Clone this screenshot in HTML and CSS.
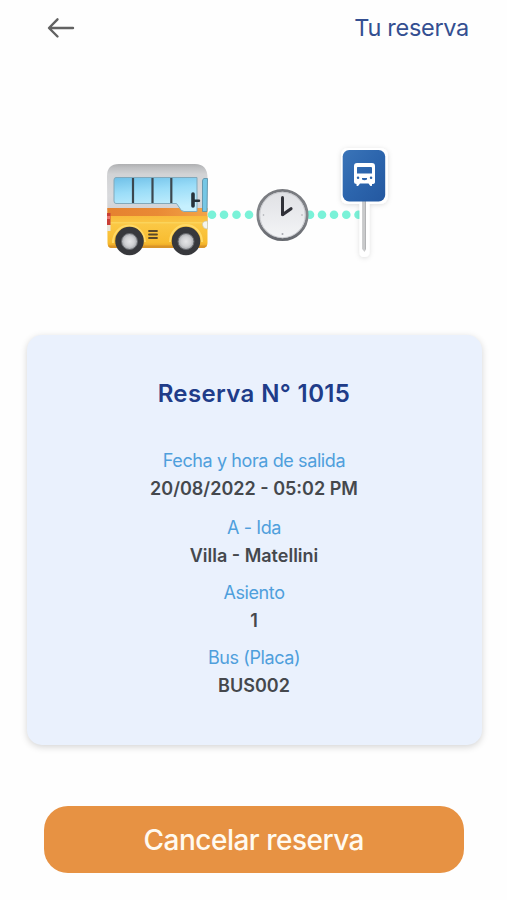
FILE: index.html
```html
<!DOCTYPE html>
<html lang="es">
<head>
<meta charset="utf-8">
<title>Tu reserva</title>
<link rel="stylesheet" href="styles.css">
</head>
<body>
<header class="header">
  <svg class="back" width="28" height="22" viewBox="47 17 28 22" aria-hidden="true">
    <path d="M73 28H49.500M57.500 19.300L49 28L57.500 36.500" fill="none" stroke="#626262" stroke-width="2.400" stroke-linecap="round" stroke-linejoin="round"/>
  </svg>
  <h1 class="header-title">Tu reserva</h1>
</header>
<main>
  <svg class="scene" width="507" height="140" viewBox="0 135 507 140" aria-hidden="true">
    <defs>
      <linearGradient id="roof" x2="0" y2="1"><stop stop-color="#aaabad"/><stop offset=".1" stop-color="#bfc0c2"/><stop offset=".24" stop-color="#d2d3d5"/><stop offset=".7" stop-color="#d9dadd"/><stop offset="1" stop-color="#d2d3d6"/></linearGradient>
      <linearGradient id="body" x2="0" y2="1"><stop stop-color="#f8bb3c"/><stop offset=".25" stop-color="#fbc845"/><stop offset=".8" stop-color="#f8bc30"/><stop offset="1" stop-color="#e39c1e"/></linearGradient>
      <linearGradient id="stripe"><stop stop-color="#e5822f"/><stop offset=".5" stop-color="#e98a35"/><stop offset="1" stop-color="#f3a548"/></linearGradient>
      <linearGradient id="glass" x2=".25" y2="1"><stop stop-color="#6fc0e8"/><stop offset=".45" stop-color="#9bddf8"/><stop offset="1" stop-color="#c6f0fe"/></linearGradient>
      <linearGradient id="rim" x2="0" y2="1"><stop stop-color="#77797e"/><stop offset=".5" stop-color="#85878c"/><stop offset="1" stop-color="#65686e"/></linearGradient>
      <linearGradient id="dial" x2="0" y2="1"><stop stop-color="#dfe0e4"/><stop offset="1" stop-color="#f4f5f7"/></linearGradient>
      <radialGradient id="hub"><stop stop-color="#e6e6e8"/><stop offset=".6" stop-color="#cfd0d3"/><stop offset="1" stop-color="#a5a7ab"/></radialGradient>
      <linearGradient id="sign" x1="0" y1="0" x2="1" y2="1"><stop stop-color="#3a74b8"/><stop offset=".5" stop-color="#2c65ad"/><stop offset="1" stop-color="#2458a0"/></linearGradient>
      <linearGradient id="pole"><stop stop-color="#b5b6b8"/><stop offset=".5" stop-color="#d2d3d4"/><stop offset="1" stop-color="#a6a7a9"/></linearGradient>
      <filter id="shade" x="-30%" y="-20%" width="160%" height="140%"><feDropShadow dx="0" dy="1" stdDeviation="2.800" flood-color="#000" flood-opacity=".13"/></filter>
      <clipPath id="bus"><path d="M107 176Q107 164 119 164H195Q207.500 164 207.500 178V243Q207.500 248 202 248H112Q107.500 248 107.500 243Z"/></clipPath>
    </defs>
    <g clip-path="url(#bus)">
      <path fill="url(#roof)" d="M106 163H209V210H106Z"/>
      <path fill="url(#stripe)" d="M106 208H209V224H106Z"/>
      <path fill="url(#body)" d="M106 216H209V249H106Z"/>
      <path fill="#fbd45b" d="M106 222H209V223.500H106Z"/>
      <path fill="#d99428" d="M106 245.500H209V248H106Z"/>
    </g>
    <path fill="url(#glass)" stroke="#82a9bb" stroke-width="1" d="M116 177.500H197V211.500H184Q181 211.500 179 207L176.500 203.500H116Q114 203.500 114 201V180Q114 177.500 116 177.500Z"/>
    <path d="M133 178V203M152.500 178V203M171.300 178V203" stroke="#3b474f" stroke-width="2.200"/>
    <path fill="#75c7e5" stroke="#568da4" stroke-width=".8" d="M207.500 178.500H204Q202.500 179 202.500 181V211.500H207Z"/>
    <path d="M193 194V206" stroke="#27323a" stroke-width="3.600" stroke-linecap="round"/><path d="M194 200.800H199" stroke="#27323a" stroke-width="2.400" stroke-linecap="round"/>
    <path fill="#c93e36" d="M107 213H110.500V225H107Z"/><path fill="#ed7770" d="M107 216H110V219H107Z"/><path fill="#e8e5da" d="M107 225H110.500V231H107Z"/>
    <path fill="#f4f5ee" stroke="#c5c2ad" stroke-width=".6" d="M207.500 221Q202 221 202.500 225Q203 229 207.500 229Z"/>
    <path d="M149 231H157M149 234.500H157M149 238H157" stroke="#59482a" stroke-width="1.800" stroke-linecap="round"/>
    <path d="M113 243A16 17 0 0 1 145 242M170 242A16 17 0 0 1 202 242" fill="none" stroke="#ffd966" stroke-width="2"/>
    <g fill="#37383c"><circle cx="129.500" cy="241" r="14.300"/><circle cx="186" cy="241" r="14.300"/></g>
    <g fill="url(#hub)" stroke="#66686d" stroke-width="1"><circle cx="129.500" cy="241.500" r="8"/><circle cx="186" cy="241.500" r="8"/></g>
    <g fill="#7af2d8"><circle cx="212" cy="214.800" r="4.300"/><circle cx="224" cy="214.800" r="4.300"/><circle cx="236.500" cy="214.800" r="4.300"/><circle cx="249" cy="214.800" r="4.300"/><circle cx="310" cy="214.800" r="4.300"/><circle cx="322" cy="214.800" r="4.300"/><circle cx="334" cy="214.800" r="4.300"/><circle cx="346.300" cy="214.800" r="4.300"/><circle cx="358.500" cy="214.800" r="4.300"/></g>
    <circle cx="282.500" cy="215" r="24.600" fill="url(#dial)" stroke="url(#rim)" stroke-width="2.900"/>
    <circle cx="282.500" cy="215" r="22.700" fill="none" stroke="#c1c3c8" stroke-width=".8"/>
    <path d="M282.500 197.500V214.500" stroke="#303138" stroke-width="3" stroke-linecap="round"/>
    <path d="M282.800 214.500L291 208.700" stroke="#303138" stroke-width="3.200" stroke-linecap="round"/>
    <g fill="#a6a8ae"><circle cx="282.500" cy="234" r="1"/><circle cx="263.500" cy="215" r=".8"/><circle cx="302" cy="215" r=".8"/></g>
    <g filter="url(#shade)" fill="#fff"><path d="M348 148H380Q388 148 388 156V195Q388 204 379 204H369.500V252Q369.500 257 364 257Q359.500 257 359.500 252V204H348Q341 204 341 197V156Q341 148 348 148Z"/></g>
    <path fill="url(#pole)" d="M362.300 200H366V249L364.500 252L362.300 249Z"/>
    <rect x="342.700" y="150" width="42.500" height="51.500" rx="6.500" fill="url(#sign)"/>
    <path fill="#fff" fill-rule="evenodd" d="M357 163H372Q375 163 375 166V182Q375 184 372 184V185.500Q371 186.500 370 185.500L368.500 183.500H360L358.500 185.500Q357.300 186.500 356.500 185.500V184Q354 184 354 182V166Q354 163 357 163ZM357.500 167Q357 167 357 168V173.500H372V168Q372 167 371 167ZM358 176.500A1.200 1.200 0 1 0 358.100 179A1.200 1.200 0 1 0 358 176.500ZM371 176.500A1.200 1.200 0 1 0 371.100 179A1.200 1.200 0 1 0 371 176.500ZM362 178V179.500Q364.500 181 367 179.500V178Z"/>
  </svg>
  <section class="card">
    <h2 class="card-title">Reserva N° 1015</h2>
    <dl class="details">
      <div class="detail first"><dt>Fecha y hora de salida</dt><dd>20/08/2022 - 05:02 PM</dd></div>
      <div class="detail"><dt>A - Ida</dt><dd>Villa - Matellini</dd></div>
      <div class="detail"><dt>Asiento</dt><dd>1</dd></div>
      <div class="detail"><dt>Bus (Placa)</dt><dd>BUS002</dd></div>
    </dl>
  </section>
  <button class="cancel" type="button">Cancelar reserva</button>
</main>
</body>
</html>
```
FILE: styles.css
```css
* { box-sizing: border-box; }
body { margin: 0; height: 900px; background: #fefefe; font-family: Inter, "Liberation Sans", sans-serif; }
.header { height: 56px; padding: 0 38px 0 47px; display: flex; align-items: center; justify-content: space-between; }
.back { display: block; }
.header-title { margin: 0; color: #344f91; font-size: 23.5px; line-height: 30px; font-weight: 400; letter-spacing: -0.3px; }
.scene { display: block; margin-top: 79px; }
.card { width: 455px; height: 410px; margin: 60px 0 0 26.5px; padding-top: 44px; border-radius: 15px; background: #eaf1fd; box-shadow: 0 2px 7px rgb(0 0 0 / 17%); text-align: center; }
.card-title { margin: 0; color: #203c89; font-size: 24px; line-height: 30px; font-weight: 600; letter-spacing: 0.38px; }
.details { margin: 38px 0 0; font-size: 18px; line-height: 28px; }
.detail { height: 65px; }
.detail.first { height: 67px; }
dt { color: #4f9fdc; letter-spacing: -0.4px; }
dd { margin: 0; color: #45484d; font-weight: 600; }
.cancel { display: block; width: 420.5px; height: 67px; margin: 61px 0 0 43.5px; padding: 1px 0 0; border: 0; border-radius: 24px; background: #e79243; color: #fffaf0; font: 500 28px/66px Inter, "Liberation Sans", sans-serif; letter-spacing: -0.5px; }
```
